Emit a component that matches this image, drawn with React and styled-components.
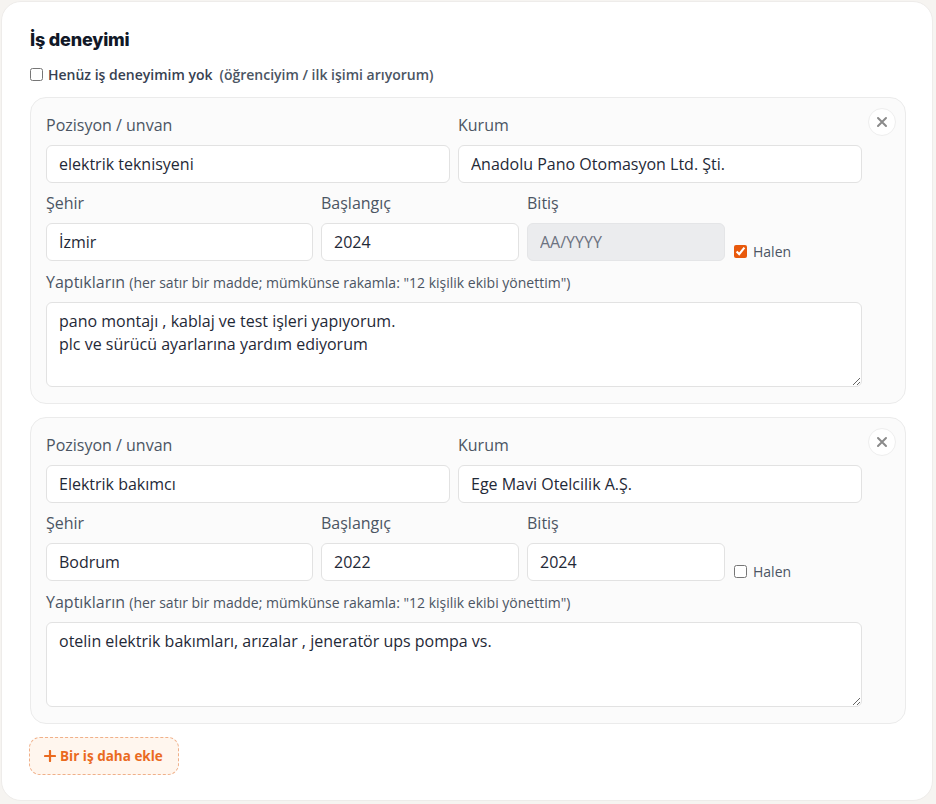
import React from 'react';
import styled, {createGlobalStyle} from 'styled-components';

const GlobalStyle = createGlobalStyle`
    body {
        margin: 0;
        background: #f6f4f1;
        font-family: "Open Sans", "Noto Sans", sans-serif;
    }
`

const Panel = styled.section`
    box-sizing: border-box;
    width: 932px;
    height: 800px;
    margin: 1px 0 0 1px;
    padding: 27px 26px 0 28px;
    background: #ffffff;
    border: 1px solid #eeecea;
    border-radius: 20px;
`

const Title = styled.h2`
    margin: 0;
    font-family: Inter, "Noto Sans", sans-serif;
    font-weight: 800;
    font-size: 18px;
    line-height: 22px;
    color: #111827;
    letter-spacing: -0.2px;
`

const NoExp = styled.label`
    display: flex;
    align-items: center;
    gap: 5px;
    margin-top: 14px;
    height: 18px;
    font-size: 14px;
    font-weight: 600;
    color: #374151;

    input {
        margin: 0;
        width: 13px;
        height: 13px;
    }

    span {
        margin-left: 2px;
        font-weight: 600;
        color: #4b5563;
    }
`

const List = styled.div`
    display: flex;
    flex-direction: column;
    gap: 13px;
    margin-top: 14px;
`

const Job = styled.div`
    position: relative;
    box-sizing: border-box;
    padding: 17px 43px 16px 15px;
    background: #fbfbfb;
    border: 1px solid #ebebeb;
    border-radius: 16px;
`

const CloseBtn = styled.button`
    position: absolute;
    top: 10px;
    right: 9px;
    width: 28px;
    height: 28px;
    padding: 0;
    display: flex;
    align-items: center;
    justify-content: center;
    background: #ffffff;
    border: 1px solid #eeeeee;
    border-radius: 50%;
    color: #8a8a8a;
`

const Row = styled.div`
    display: grid;
    grid-template-columns: ${props => props.cols};
    gap: 8px;
    margin-top: ${props => props.top || 0}px;
`

const Field = styled.div`
    display: flex;
    flex-direction: column;
`

const Label = styled.div`
    font-size: 16px;
    line-height: 20px;
    color: #4b5563;
    margin-bottom: ${props => props.gap || 10}px;

    small {
        font-size: 14px;
        color: #4b5563;
    }
`

const Input = styled.input`
    box-sizing: border-box;
    height: 38px;
    width: 100%;
    padding: 0 12px;
    font-family: "Open Sans", "Noto Sans", sans-serif;
    font-size: 16px;
    color: #1f2937;
    background: ${props => (props.disabled ? '#ebecee' : '#ffffff')};
    border: 1px solid ${props => (props.disabled ? '#e4e5e7' : '#e2e2e2')};
    border-radius: 6px;
    outline: none;

    &::placeholder {
        color: #6b7280;
    }
`

const Current = styled.label`
    display: flex;
    align-items: center;
    gap: 6px;
    align-self: end;
    margin: 0 0 1px 1px;
    height: 18px;
    font-size: 14px;
    font-weight: 400;
    color: #4b5563;

    input {
        margin: 0;
        width: 13px;
        height: 13px;
        accent-color: #e8590c;
    }
`

const Notes = styled.textarea`
    box-sizing: border-box;
    display: block;
    width: 100%;
    height: 85px;
    padding: 7px 12px;
    font-family: "Open Sans", "Noto Sans", sans-serif;
    font-size: 16px;
    line-height: 23px;
    color: #1f2937;
    background: #ffffff;
    border: 1px solid #e2e2e2;
    border-radius: 6px;
    outline: none;
    resize: vertical;
`

const AddBtn = styled.button`
    display: inline-flex;
    align-items: center;
    gap: 4px;
    box-sizing: border-box;
    margin: 13px 0 0 -1px;
    height: 38px;
    padding: 0 15px 0 14px;
    font-family: "Open Sans", "Noto Sans", sans-serif;
    font-size: 13.5px;
    font-weight: 700;
    color: #ea6a1f;
    background: #fff6ee;
    border: 1px dashed #f0b089;
    border-radius: 11px;
`

const jobs = [
    {
        title: 'elektrik teknisyeni',
        org: 'Anadolu Pano Otomasyon Ltd. Şti.',
        city: 'İzmir',
        start: '2024',
        end: '',
        current: true,
        notes: 'pano montajı , kablaj ve test işleri yapıyorum.\nplc ve sürücü ayarlarına yardım ediyorum',
    },
    {
        title: 'Elektrik bakımcı',
        org: 'Ege Mavi Otelcilik A.Ş.',
        city: 'Bodrum',
        start: '2022',
        end: '2024',
        current: false,
        notes: 'otelin elektrik bakımları, arızalar , jeneratör ups pompa vs.',
    },
]

const XIcon = () => (
    <svg width="12" height="12" viewBox="0 0 12 12" fill="none" stroke="currentColor" strokeWidth="2" strokeLinecap="round">
        <path d="M2 2 L10 10 M10 2 L2 10" />
    </svg>
)

const PlusIcon = () => (
    <svg width="12" height="12" viewBox="0 0 12 12" fill="none" stroke="currentColor" strokeWidth="2.2" strokeLinecap="round">
        <path d="M6 1 V11 M1 6 H11" />
    </svg>
)

const JobCard = ({job}) => (
    <Job>
        <CloseBtn aria-label="Sil"><XIcon /></CloseBtn>
        <Row cols="1fr 1fr">
            <Field>
                <Label>Pozisyon / unvan</Label>
                <Input defaultValue={job.title} />
            </Field>
            <Field>
                <Label>Kurum</Label>
                <Input defaultValue={job.org} />
            </Field>
        </Row>
        <Row cols="267px 198px 198px 1fr" top={10}>
            <Field>
                <Label>Şehir</Label>
                <Input defaultValue={job.city} />
            </Field>
            <Field>
                <Label>Başlangıç</Label>
                <Input defaultValue={job.start} />
            </Field>
            <Field>
                <Label>Bitiş</Label>
                <Input defaultValue={job.end} placeholder="AA/YYYY" disabled={job.current} />
            </Field>
            <Current>
                <input type="checkbox" defaultChecked={job.current} />
                Halen
            </Current>
        </Row>
        <Row cols="1fr" top={11}>
            <Field>
                <Label gap={9}>Yaptıkların <small>(her satır bir madde; mümkünse rakamla: "12 kişilik ekibi yönettim")</small></Label>
                <Notes defaultValue={job.notes} />
            </Field>
        </Row>
    </Job>
)

const App = () => (
    <>
        <GlobalStyle />
        <Panel>
            <Title>İş deneyimi</Title>
            <NoExp>
                <input type="checkbox" />
                Henüz iş deneyimim yok <span>(öğrenciyim / ilk işimi arıyorum)</span>
            </NoExp>
            <List>
                {jobs.map((job, i) => <JobCard key={i} job={job} />)}
            </List>
            <AddBtn><PlusIcon /> Bir iş daha ekle</AddBtn>
        </Panel>
    </>
)

export default App;
